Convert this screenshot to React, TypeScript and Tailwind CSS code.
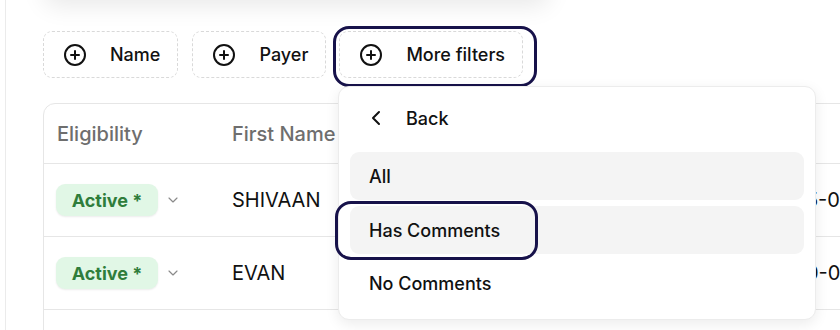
import React from "react";

const PlusCircle = () => (
  <svg width="24" height="24" viewBox="0 0 24 24" fill="none" stroke="#111" strokeWidth="2" strokeLinecap="round" strokeLinejoin="round">
    <circle cx="12" cy="12" r="10" />
    <path d="M8 12h8" />
    <path d="M12 8v8" />
  </svg>
);

const ChevronDown = () => (
  <svg width="16" height="16" viewBox="0 0 24 24" fill="none" stroke="#8a8a8a" strokeWidth="1.75" strokeLinecap="round" strokeLinejoin="round">
    <path d="m6 9 6 6 6-6" />
  </svg>
);

const ChevronLeft = () => (
  <svg width="24" height="24" viewBox="0 0 24 24" fill="none" stroke="#111" strokeWidth="2" strokeLinecap="round" strokeLinejoin="round">
    <path d="m15 18-6-6 6-6" />
  </svg>
);

function FilterButton({ label, className = "" }: { label: string; className?: string }) {
  return (
    <button
      className={
        "flex h-[47px] items-center gap-[23px] rounded-[9px] border border-dashed border-[#d9d9d9] bg-white pl-[19px] pr-[17px] text-[18px] font-medium text-[#111] " +
        className
      }
    >
      <PlusCircle />
      <span>{label}</span>
    </button>
  );
}

const rows = [
  { first: "SHIVAAN", date: "2015-06-12" },
  { first: "EVAN", date: "2010-09-03" },
];

export default function App() {
  return (
    <div
      className="relative h-[330px] w-[840px] overflow-hidden bg-white"
      style={{ fontFamily: "Inter, 'Noto Sans', sans-serif" }}
    >
      <div className="ml-[5px] flex h-full flex-col border-l border-[#ebebeb]">
        {/* card above, only its shadow visible */}
        <div className="-mt-[60px] ml-[38px] h-[60px] w-[505px] shrink-0 rounded-xl bg-white shadow-[0_6px_24px_rgba(0,0,0,0.09)]" />

        <div className="mt-[31px] flex pl-[37px]">
          <FilterButton label="Name" />
          <FilterButton label="Payer" className="ml-[14px]" />
          <FilterButton label="More filters" className="ml-[13px]" />
        </div>

        <div className="ml-[37px] mt-[25px] w-[1000px] shrink-0 rounded-tl-[12px] border border-[#e6e6e6]">
          <div className="flex h-[60px] items-center border-b border-[#e6e6e6] text-[20px] font-medium text-[#6e6e6e]">
            <div className="w-[175px] pl-[13px]">Eligibility</div>
            <div className="w-[541px] pl-[13px]">First Name</div>
            <div className="pl-[13px]">DOB</div>
          </div>
          {rows.map((r) => (
            <div key={r.first} className="flex h-[73px] items-center border-b border-[#e6e6e6] text-[20px] text-[#111]">
              <div className="flex w-[175px] items-center pl-[12px]">
                <span className="flex h-[32px] w-[102px] items-center justify-center rounded-[9px] bg-[#e1f7e6] text-[18px] font-bold text-[#2f7d3b] shadow-[0_1px_2px_rgba(0,0,0,0.08)]">
                  Active *
                </span>
                <span className="ml-[7px] flex items-center">
                  <ChevronDown />
                </span>
              </div>
              <div className="w-[541px] pl-[13px]">{r.first}</div>
              <div className="pl-[13px]">{r.date}</div>
            </div>
          ))}
          <div className="h-[40px]" />
        </div>
      </div>

      {/* focus ring around More filters */}
      <div className="pointer-events-none absolute left-[333px] top-[26px] h-[61px] w-[204px] rounded-[16px] border-[3px] border-[#17124a]" />

      {/* popover */}
      <div className="absolute left-[338px] top-[86px] h-[234px] w-[478px] rounded-[11px] border border-[#ececec] bg-white px-[11px] pt-[10px] shadow-[0_4px_14px_rgba(0,0,0,0.08)]">
        <div className="flex h-[42px] items-center pl-[14px] text-[18px] font-medium text-[#111]">
          <ChevronLeft />
          <span className="ml-[18px]">Back</span>
        </div>
        <div className="mt-[13px] flex h-[48px] items-center rounded-[9px] bg-[#f4f4f4] pl-[19px] text-[18px] font-medium text-[#111]">
          All
        </div>
        <div className="mt-[6px] flex h-[48px] items-center rounded-[9px] bg-[#f4f4f4] pl-[19px] text-[18px] font-medium text-[#111]">
          Has Comments
        </div>
        <div className="mt-[5px] flex h-[48px] items-center rounded-[9px] pl-[19px] text-[18px] font-medium text-[#111]">
          No Comments
        </div>
      </div>

      {/* focus ring around Has Comments */}
      <div className="pointer-events-none absolute left-[335px] top-[201px] h-[59px] w-[203px] rounded-[16px] border-[3px] border-[#17124a]" />
    </div>
  );
}
